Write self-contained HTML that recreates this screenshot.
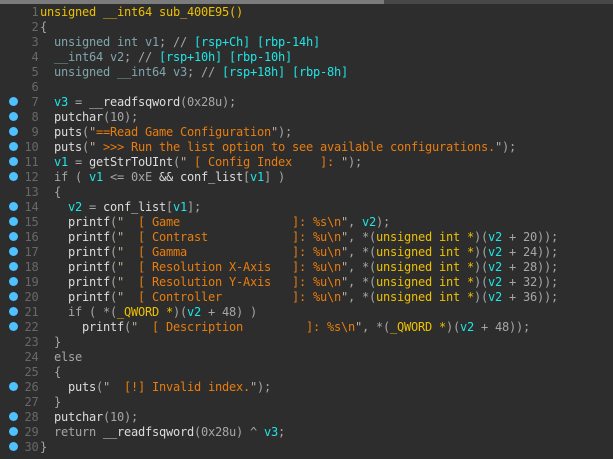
<!DOCTYPE html>
<html><head><meta charset="utf-8">
<style>
html,body{margin:0;padding:0;width:613px;height:459px;overflow:hidden;background:#2d2d2d}
#sb{position:absolute;left:0;top:0;width:613px;height:4px;background:#484848}
#sb i{position:absolute;left:0;top:0;width:384px;height:4px;background:#7b7b7b}
.d{position:absolute;left:9px;width:9px;height:9px;margin-top:-1px;border-radius:50%;background:#4fc1ff}
.n,.c{position:absolute;height:15px;line-height:15px;font-family:"DejaVu Sans Mono",monospace;font-size:12px;letter-spacing:-.225px;white-space:pre;font-weight:400}
.n{left:0;width:38.5px;text-align:right;color:#686868}
.c{left:40px;color:#a6a6a6}
.w{color:#dcdcdc}.y{color:#ecc000}.k{color:#7fa5ad}.a{color:#1fe6e6}.o{color:#e87d0e}.g{color:#a6a6a6}.q{color:#c2ac98}
</style></head><body>
<div id="sb"><i></i></div>
<div class="n" style="top:5px">1</div><div class="c" style="top:5px"><span class="y">unsigned __int64 sub_400E95</span><span class="y">()</span></div>
<div class="n" style="top:20px">2</div><div class="c" style="top:20px">{</div>
<div class="n" style="top:35px">3</div><div class="c" style="top:35px">  <span class="k">unsigned int v1</span>; // <span class="a">[rsp+Ch] [rbp-14h]</span></div>
<div class="n" style="top:50px">4</div><div class="c" style="top:50px">  <span class="k">__int64 v2</span>; // <span class="a">[rsp+10h] [rbp-10h]</span></div>
<div class="n" style="top:65px">5</div><div class="c" style="top:65px">  <span class="k">unsigned __int64 v3</span>; // <span class="a">[rsp+18h] [rbp-8h]</span></div>
<div class="n" style="top:80px">6</div>
<div class="d" style="top:98px"></div><div class="n" style="top:95px">7</div><div class="c" style="top:95px">  <span class="a">v3</span> = <span class="w">__readfsqword</span>(0x28u);</div>
<div class="d" style="top:113px"></div><div class="n" style="top:110px">8</div><div class="c" style="top:110px">  <span class="w">putchar</span>(10);</div>
<div class="d" style="top:128px"></div><div class="n" style="top:125px">9</div><div class="c" style="top:125px">  <span class="w">puts</span>(<span class="q">"</span><span class="o">==Read Game Configuration</span><span class="q">"</span>);</div>
<div class="d" style="top:143px"></div><div class="n" style="top:140px">10</div><div class="c" style="top:140px">  <span class="w">puts</span>(<span class="q">"</span><span class="o"> &gt;&gt;&gt; Run the list option to see available configurations.</span><span class="q">"</span>);</div>
<div class="d" style="top:158px"></div><div class="n" style="top:155px">11</div><div class="c" style="top:155px">  <span class="a">v1</span> = <span class="w">getStrToUInt</span>(<span class="q">"</span><span class="o"> [ Config Index    ]: </span><span class="q">"</span>);</div>
<div class="d" style="top:173px"></div><div class="n" style="top:170px">12</div><div class="c" style="top:170px">  if ( <span class="a">v1</span> &lt;= 0xE <span class="w">&amp;&amp; conf_list</span>[<span class="a">v1</span>] )</div>
<div class="n" style="top:185px">13</div><div class="c" style="top:185px">  {</div>
<div class="d" style="top:203px"></div><div class="n" style="top:200px">14</div><div class="c" style="top:200px">    <span class="a">v2</span> = <span class="w">conf_list</span>[<span class="a">v1</span>];</div>
<div class="d" style="top:218px"></div><div class="n" style="top:215px">15</div><div class="c" style="top:215px">    <span class="w">printf</span>(<span class="q">"</span><span class="o">  [ Game                ]: %s\n</span><span class="q">"</span>, <span class="a">v2</span>);</div>
<div class="d" style="top:233px"></div><div class="n" style="top:230px">16</div><div class="c" style="top:230px">    <span class="w">printf</span>(<span class="q">"</span><span class="o">  [ Contrast            ]: %u\n</span><span class="q">"</span>, *(<span class="y">unsigned int *</span>)(<span class="a">v2</span> + 20));</div>
<div class="d" style="top:248px"></div><div class="n" style="top:245px">17</div><div class="c" style="top:245px">    <span class="w">printf</span>(<span class="q">"</span><span class="o">  [ Gamma               ]: %u\n</span><span class="q">"</span>, *(<span class="y">unsigned int *</span>)(<span class="a">v2</span> + 24));</div>
<div class="d" style="top:263px"></div><div class="n" style="top:260px">18</div><div class="c" style="top:260px">    <span class="w">printf</span>(<span class="q">"</span><span class="o">  [ Resolution X-Axis   ]: %u\n</span><span class="q">"</span>, *(<span class="y">unsigned int *</span>)(<span class="a">v2</span> + 28));</div>
<div class="d" style="top:278px"></div><div class="n" style="top:275px">19</div><div class="c" style="top:275px">    <span class="w">printf</span>(<span class="q">"</span><span class="o">  [ Resolution Y-Axis   ]: %u\n</span><span class="q">"</span>, *(<span class="y">unsigned int *</span>)(<span class="a">v2</span> + 32));</div>
<div class="d" style="top:293px"></div><div class="n" style="top:290px">20</div><div class="c" style="top:290px">    <span class="w">printf</span>(<span class="q">"</span><span class="o">  [ Controller          ]: %u\n</span><span class="q">"</span>, *(<span class="y">unsigned int *</span>)(<span class="a">v2</span> + 36));</div>
<div class="d" style="top:308px"></div><div class="n" style="top:305px">21</div><div class="c" style="top:305px">    if ( *(<span class="y">_QWORD *</span>)(<span class="a">v2</span> + 48) )</div>
<div class="d" style="top:323px"></div><div class="n" style="top:320px">22</div><div class="c" style="top:320px">      <span class="w">printf</span>(<span class="q">"</span><span class="o">  [ Description         ]: %s\n</span><span class="q">"</span>, *(<span class="y">_QWORD *</span>)(<span class="a">v2</span> + 48));</div>
<div class="n" style="top:335px">23</div><div class="c" style="top:335px">  }</div>
<div class="n" style="top:350px">24</div><div class="c" style="top:350px">  else</div>
<div class="n" style="top:365px">25</div><div class="c" style="top:365px">  {</div>
<div class="d" style="top:383px"></div><div class="n" style="top:380px">26</div><div class="c" style="top:380px">    <span class="w">puts</span>(<span class="q">"</span><span class="o">  [!] Invalid index.</span><span class="q">"</span>);</div>
<div class="n" style="top:395px">27</div><div class="c" style="top:395px">  }</div>
<div class="d" style="top:413px"></div><div class="n" style="top:410px">28</div><div class="c" style="top:410px">  <span class="w">putchar</span>(10);</div>
<div class="d" style="top:428px"></div><div class="n" style="top:425px">29</div><div class="c" style="top:425px">  return <span class="w">__readfsqword</span>(0x28u) ^ <span class="a">v3</span>;</div>
<div class="d" style="top:443px"></div><div class="n" style="top:440px">30</div><div class="c" style="top:440px">}</div>
</body></html>
